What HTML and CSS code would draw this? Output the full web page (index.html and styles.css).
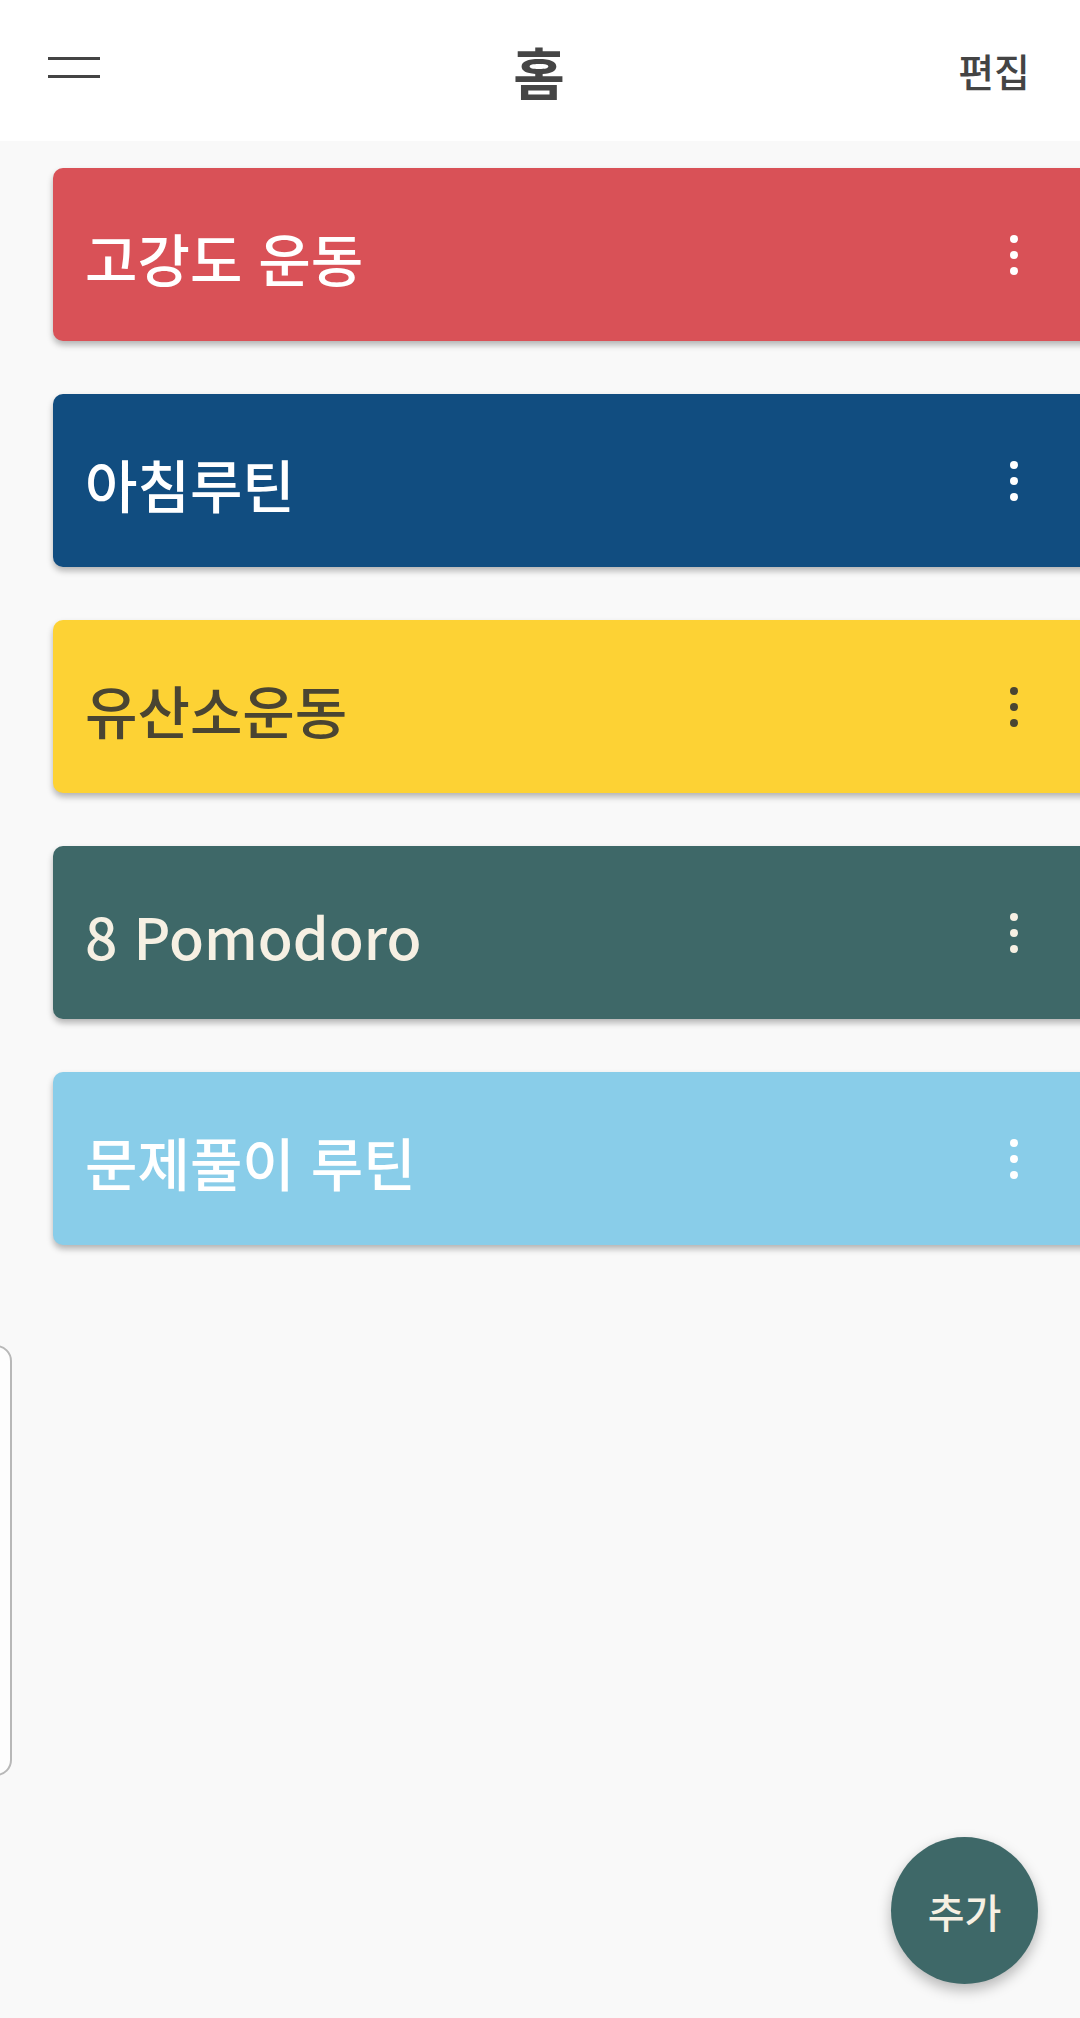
FILE: index.html
```html
<!DOCTYPE html>
<html lang="ko">
<head>
<meta charset="utf-8">
<title>홈</title>
<link rel="stylesheet" href="styles.css">
</head>
<body>
<div class="screen">
  <header class="topbar">
    <div class="menu-btn" aria-label="menu">
      <svg width="52" height="22" viewBox="0 0 52 22"><rect x="0" y="0" width="52" height="3" fill="#444"/><rect x="0" y="18" width="52" height="3" fill="#444"/></svg>
    </div>
    <h1 class="title">홈</h1>
    <div class="edit">편집</div>
  </header>

  <main class="list">
    <div class="card card-red"><span class="name">고강도 운동</span><span class="kebab"><i></i><i></i><i></i></span></div>
    <div class="card card-blue"><span class="name">아침루틴</span><span class="kebab"><i></i><i></i><i></i></span></div>
    <div class="card card-yellow"><span class="name">유산소운동</span><span class="kebab"><i></i><i></i><i></i></span></div>
    <div class="card card-teal"><span class="name">8 Pomodoro</span><span class="kebab"><i></i><i></i><i></i></span></div>
    <div class="card card-sky"><span class="name">문제풀이 루틴</span><span class="kebab"><i></i><i></i><i></i></span></div>
  </main>

  <div class="side-handle"></div>
  <button class="fab">추가</button>
</div>
</body>
</html>
```
FILE: styles.css
```css
html, body {
  margin: 0;
  padding: 0;
}
body {
  width: 1080px;
  height: 2018px;
  overflow: hidden;
  background: #f9f9f9;
  font-family: "Noto Sans CJK KR", "Noto Sans", sans-serif;
}
.screen {
  position: relative;
  width: 1080px;
  height: 2018px;
  overflow: hidden;
  background: #f9f9f9;
}
.topbar {
  height: 141px;
  background: #ffffff;
  display: grid;
  grid-template-columns: 1fr auto 1fr;
  align-items: center;
  padding: 0 50px 0 48px;
  box-sizing: border-box;
}
.menu-btn {
  display: flex;
  align-items: center;
  height: 22px;
  margin-top: -6px;
}
.menu-btn svg { display: block; }
.title {
  margin: 0;
  font-size: 56px;
  font-weight: 700;
  color: #454545;
  line-height: 1;
}
.edit {
  justify-self: end;
  font-size: 39px;
  font-weight: 500;
  color: #444;
  line-height: 1;
}
.list {
  display: flex;
  flex-direction: column;
  gap: 53px;
  padding: 27px 0 0 53px;
}
.card {
  width: 1060px;
  height: 173px;
  box-sizing: border-box;
  border-radius: 10px;
  display: flex;
  align-items: center;
  justify-content: space-between;
  padding: 0 95px 0 32px;
  box-shadow: 0 4px 6px rgba(0,0,0,0.28);
  flex-shrink: 0;
}
.name {
  font-size: 57px;
  font-weight: 500;
  line-height: 1;
  padding-top: 6px;
}
.kebab {
  display: flex;
  flex-direction: column;
  gap: 8px;
  width: 8px;
  align-items: center;
}
.kebab i {
  display: block;
  width: 8px;
  height: 8px;
  border-radius: 50%;
  background: currentColor;
}
.card-red { background: #d95157; color: #ffffff; }
.card-blue { background: #114d80; color: #ffffff; }
.card-yellow { background: #fdd234; color: #4a4532; }
.card-teal { background: #3e6868; color: #f6f0e3; }
.card-sky { background: #89cde9; color: #ffffff; }

.side-handle {
  position: absolute;
  left: -22px;
  top: 1345px;
  width: 30px;
  height: 427px;
  border: 2px solid #b8b8b8;
  border-radius: 16px;
  background: #fdfdfd;
}
.fab {
  position: absolute;
  left: 891px;
  top: 1837px;
  width: 147px;
  height: 147px;
  border-radius: 50%;
  border: none;
  background: #3e6868;
  color: #f6f0e3;
  font-family: "Noto Sans CJK KR", "Noto Sans", sans-serif;
  font-size: 40px;
  font-weight: 500;
  box-shadow: 0 6px 14px rgba(0,0,0,0.28);
  display: flex;
  align-items: center;
  justify-content: center;
  padding: 0;
}
```
